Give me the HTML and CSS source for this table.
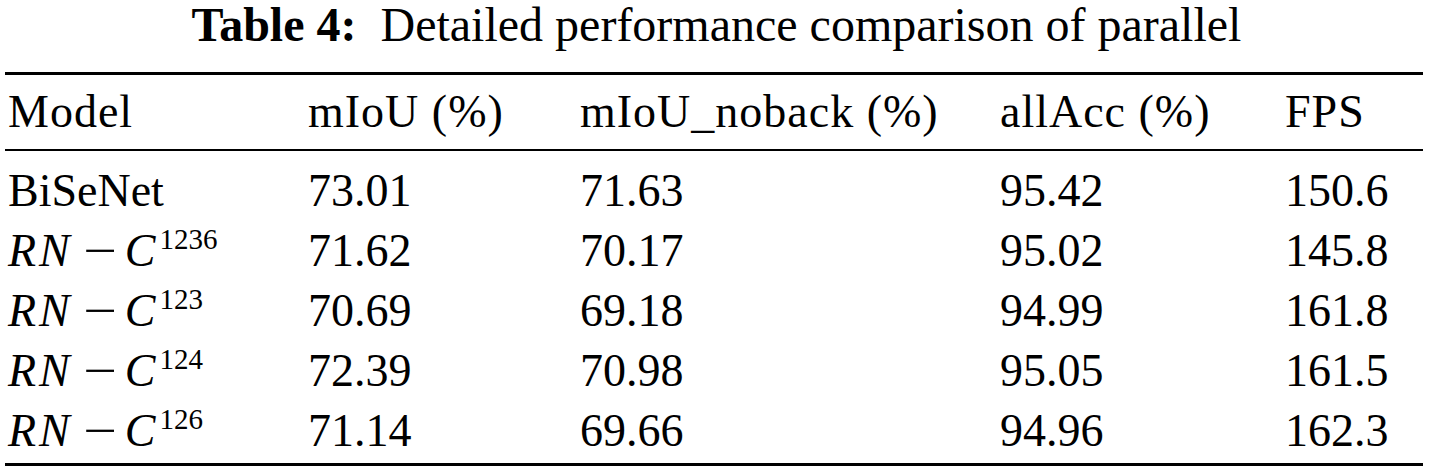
FILE: index.html
```html
<!DOCTYPE html>
<html>
  <head>
    <meta charset="utf-8" />
    <title>Table 4</title>
    <link rel="stylesheet" href="styles.css">
  </head>

  <body>
    <div class="frame">
      <p class="caption"><b>Table 4:</b>&nbsp; Detailed performance comparison of parallel</p>

      <table class="result-table">
        <thead>
          <tr>
            <th class="col-model">Model</th>
            <th class="col-miou">mIoU (%)</th>
            <th class="col-noback">mIoU_noback (%)</th>
            <th class="col-acc">allAcc (%)</th>
            <th class="col-fps">FPS</th>
          </tr>
        </thead>
        <tbody>
          <tr>
            <td>BiSeNet</td>
            <td>73.01</td>
            <td>71.63</td>
            <td>95.42</td>
            <td>150.6</td>
          </tr>
          <tr>
            <td><i>RN</i><span class="op">−</span><i>C</i><sup>1236</sup></td>
            <td>71.62</td>
            <td>70.17</td>
            <td>95.02</td>
            <td>145.8</td>
          </tr>
          <tr>
            <td><i>RN</i><span class="op">−</span><i>C</i><sup>123</sup></td>
            <td>70.69</td>
            <td>69.18</td>
            <td>94.99</td>
            <td>161.8</td>
          </tr>
          <tr>
            <td><i>RN</i><span class="op">−</span><i>C</i><sup>124</sup></td>
            <td>72.39</td>
            <td>70.98</td>
            <td>95.05</td>
            <td>161.5</td>
          </tr>
          <tr>
            <td><i>RN</i><span class="op">−</span><i>C</i><sup>126</sup></td>
            <td>71.14</td>
            <td>69.66</td>
            <td>94.96</td>
            <td>162.3</td>
          </tr>
        </tbody>
      </table>
    </div>
  </body>
</html>
```

FILE: styles.css
```css
* {
  margin: 0;
  padding: 0;
  box-sizing: border-box;
}
body {
  background: #fff;
  color: #000;
  font-family: "Liberation Serif", "Times New Roman", serif;
}
.frame {
  width: 1423px;
  padding-left: 5px;
}
.caption {
  font-size: 48px;
  line-height: 50px;
  text-align: center;
  padding-left: 5px;
}
.result-table {
  width: 1418px;
  margin-top: 22px;
  border-collapse: collapse;
  border-top: 3px solid #000;
  border-bottom: 3px solid #000;
  font-size: 46px;
  table-layout: fixed;
}
.result-table th {
  font-weight: 400;
  text-align: left;
  height: 74px;
  line-height: 74px;
  padding-left: 3px;
  letter-spacing: 1px;
  border-bottom: 2px solid #000;
}
.result-table td {
  height: 60px;
  line-height: 60px;
  padding-left: 3px;
  white-space: nowrap;
}
.result-table tbody tr:first-child td {
  height: 70px;
  padding-top: 10px;
}
.result-table tbody tr:last-child td {
  height: 62px;
  padding-bottom: 2px;
}
.col-model {
  width: 300px;
}
.col-miou {
  width: 272px;
}
.col-noback {
  width: 420px;
}
.col-acc {
  width: 285px;
}
.col-fps {
  width: 141px;
}
.result-table i {
  letter-spacing: 3px;
}
.op {
  display: inline-block;
  padding: 0 12px 0 14px;
  transform: scaleX(1.3);
}
.result-table sup {
  font-size: 29px;
  line-height: 0;
  vertical-align: 17px;
  padding-left: 1px;
}
```
